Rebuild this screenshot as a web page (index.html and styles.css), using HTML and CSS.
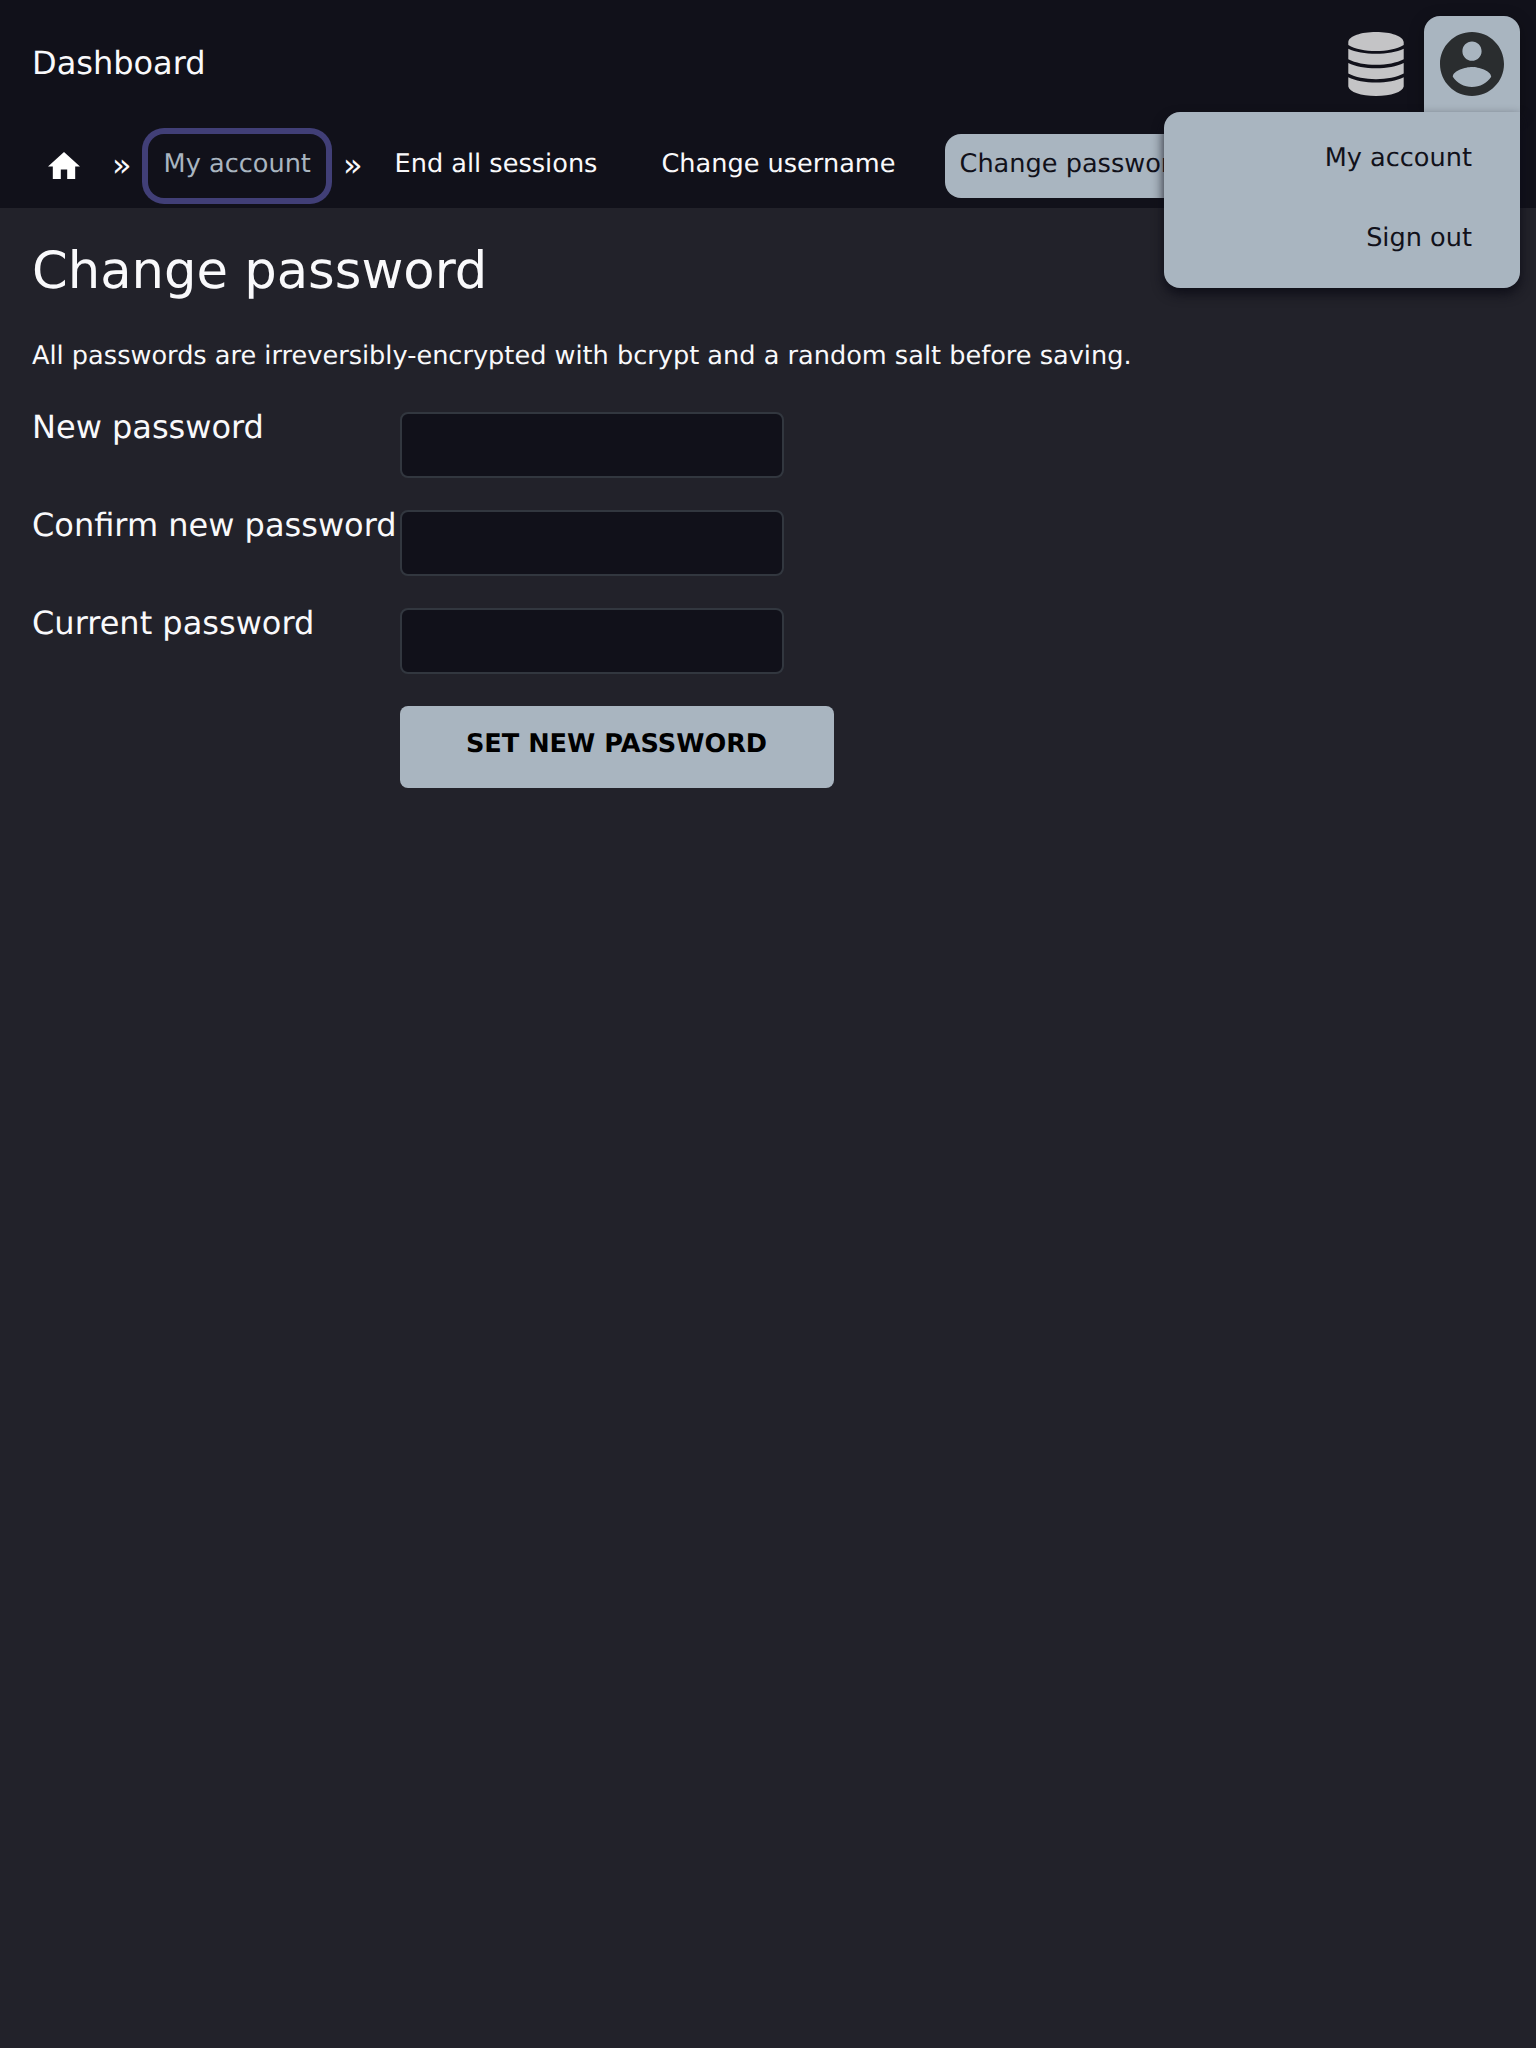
FILE: index.html
```html
<!DOCTYPE html>
<html lang="en">
<head>
<meta charset="utf-8">
<title>Change password</title>
<link rel="stylesheet" href="styles.css">
</head>
<body>
<header class="header">
  <div class="topbar">
    <div class="brand">Dashboard</div>
    <div class="tools">
      <a class="tool">
        <svg class="db-icon" viewBox="0 0 56 64"><path d="M.3 10C1 4 13 0 28 0s27 4 27.700 10v3c-7 4-17 6-27.700 6S7 17 .3 13zM.3 16.800c7 3.200 17 5 27.700 5s20.700-1.800 27.700-5v10.400c-7 3.700-17 5.500-27.700 5.500s-20.700-1.800-27.700-5.500zM.3 31c7 3.500 17 5.300 27.700 5.300s20.700-1.800 27.700-5.300v10.600c-7 3.700-17 5.700-27.700 5.700s-20.700-2-27.700-5.700zM.3 45.200c7 3.500 17 5.300 27.700 5.300s20.700-1.800 27.700-5.300v9.300C54.700 60 43 64 28 64S1.300 60 .3 54.500z"/></svg>
      </a>
      <div class="tool account">
        <svg class="user-icon" viewBox="2 2 20 20"><path d="M12 2C6.480 2 2 6.480 2 12s4.480 10 10 10 10-4.480 10-10S17.520 2 12 2zm0 3c1.660 0 3 1.340 3 3s-1.340 3-3 3-3-1.340-3-3 1.340-3 3-3zm0 14.200c-2.500 0-4.710-1.280-6-3.220.030-1.990 4-3.080 6-3.080 1.990 0 5.970 1.090 6 3.080-1.290 1.940-3.500 3.220-6 3.220z"/></svg>
        <div class="menu">
          <a class="menu-item">My account</a>
          <a class="menu-item">Sign out</a>
        </div>
      </div>
    </div>
  </div>
  <nav class="nav">
    <a class="home"><svg class="home-icon" viewBox="2 3 20 17"><path d="M10 20v-6h4v6h5v-8h3L12 3 2 12h3v8z"/></svg></a>
    <span class="sep">»</span>
    <a class="link focused">My account</a>
    <span class="sep">»</span>
    <div class="subnav">
      <a class="link">End all sessions</a>
      <a class="link">Change username</a>
      <a class="link active">Change password</a>
    </div>
  </nav>
</header>
<main class="main">
  <h1 class="title">Change password</h1>
  <p class="note">All passwords are irreversibly-encrypted with bcrypt and a random salt before saving.</p>
  <form class="form">
    <label class="label" for="new">New password</label><input class="input" id="new" type="password">
    <label class="label" for="confirm">Confirm new password</label><input class="input" id="confirm" type="password">
    <label class="label" for="current">Current password</label><input class="input" id="current" type="password">
    <button class="submit" type="button">SET NEW PASSWORD</button>
  </form>
</main>
</body>
</html>
```
FILE: styles.css
```css
* { box-sizing: border-box; }
body {
  margin: 0;
  min-height: 2048px;
  overflow-x: hidden;
  background: #22222a;
  color: #f9f9fb;
  font: 25.6px/32px "DejaVu Sans", sans-serif;
  text-rendering: geometricPrecision;
}
svg { display: block; }
.header { height: 208px; background: #11111a; }
.topbar {
  display: flex;
  justify-content: space-between;
  height: 134px;
  padding: 16px 16px 0 32px;
}
.brand { font-size: 32px; line-height: 40px; padding-top: 27px; }
.tools { display: flex; }
.tool { width: 96px; height: 96px; padding: 16px; }
.db-icon { width: 56px; height: 64px; margin-left: 4px; fill: #c4c4c6; }
.account {
  position: relative;
  background: #a9b5c0;
  border-radius: 16px 16px 0 0;
  box-shadow: 0 4px 16px rgba(0, 0, 0, .3);
}
.user-icon { width: 64px; height: 64px; fill: #2a2d2f; }
.menu {
  position: absolute;
  z-index: 2;
  top: 96px;
  right: 0;
  width: 356px;
  height: 176px;
  border-radius: 16px 0 16px 16px;
  background: #a9b5c0;
  color: #11111a;
  box-shadow: 0 6px 12px rgba(12, 12, 22, .9);
}
.menu-item { display: block; height: 80px; padding: 30px 48px 0; text-align: right; }
.nav { display: flex; gap: 16px; height: 64px; padding-left: 32px; white-space: nowrap; }
.home { width: 64px; padding: 18px 16px 0; }
.home-icon { width: 32px; height: 27.200px; fill: #fff; }
.sep { font-size: 32px; line-height: 40px; padding-top: 11px; }
.link { height: 64px; padding: 14px 16px 0; border-radius: 16px; }
.focused { width: 178.400px; margin-right: 1px; color: #a9b5c0; box-shadow: 0 0 0 6px #413f77; }
.subnav { display: flex; gap: 32px; }
.active { margin-left: 1px; padding-left: 15px; background: #a9b5c0; color: #11111a; }
.main { padding: 31px 32px; }
.title { margin: 0; font-size: 51.2px; line-height: 64px; font-weight: 400; }
.note { margin: 37px 0 0; }
.form {
  display: grid;
  grid-template-columns: 368px 1fr;
  row-gap: 32px;
  margin-top: 40px;
}
.label { font-size: 32px; line-height: 30px; height: 66px; white-space: nowrap; }
.input {
  width: 384px;
  height: 66px;
  border: 2px solid #32373f;
  border-radius: 8px;
  background: #11111a;
  color: #f9f9fb;
}
.submit {
  grid-column: 2;
  width: 434px;
  height: 82px;
  padding: 0 1px 6px 0;
  border: 0;
  border-radius: 8px;
  background: #a9b5c0;
  color: #000;
  font: bold 25.6px/32px "DejaVu Sans", sans-serif;
  text-rendering: geometricPrecision;
}
```
